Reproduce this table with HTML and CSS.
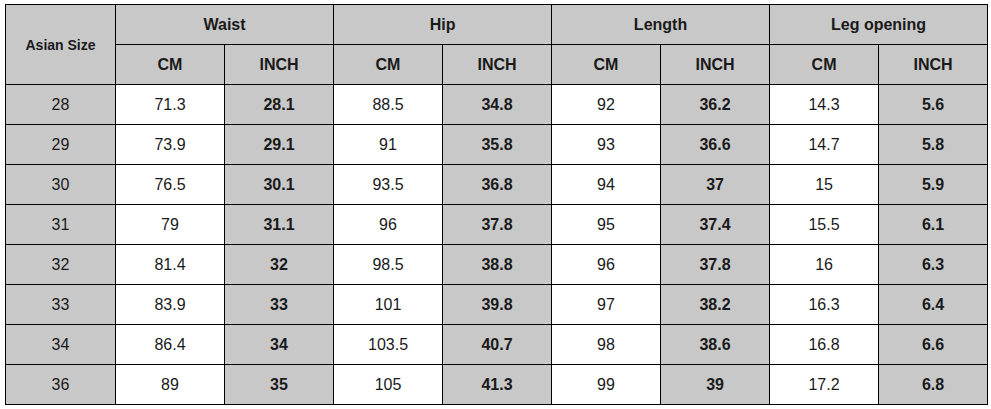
FILE: index.html
```html
<!DOCTYPE html>
<html>
<head>
<meta charset="utf-8">
<link rel="stylesheet" href="styles.css">
</head>
<body>
<table class="size-table">
  <colgroup>
    <col class="c-first">
    <col><col><col><col><col><col><col><col>
  </colgroup>
  <thead>
    <tr>
      <th rowspan="2" class="asian">Asian Size</th>
      <th colspan="2">Waist</th>
      <th colspan="2">Hip</th>
      <th colspan="2">Length</th>
      <th colspan="2">Leg opening</th>
    </tr>
    <tr>
      <th>CM</th><th>INCH</th>
      <th>CM</th><th>INCH</th>
      <th>CM</th><th>INCH</th>
      <th>CM</th><th>INCH</th>
    </tr>
  </thead>
  <tbody>
    <tr><td class="size">28</td><td class="cm">71.3</td><td class="in">28.1</td><td class="cm">88.5</td><td class="in">34.8</td><td class="cm">92</td><td class="in">36.2</td><td class="cm">14.3</td><td class="in">5.6</td></tr>
    <tr><td class="size">29</td><td class="cm">73.9</td><td class="in">29.1</td><td class="cm">91</td><td class="in">35.8</td><td class="cm">93</td><td class="in">36.6</td><td class="cm">14.7</td><td class="in">5.8</td></tr>
    <tr><td class="size">30</td><td class="cm">76.5</td><td class="in">30.1</td><td class="cm">93.5</td><td class="in">36.8</td><td class="cm">94</td><td class="in">37</td><td class="cm">15</td><td class="in">5.9</td></tr>
    <tr><td class="size">31</td><td class="cm">79</td><td class="in">31.1</td><td class="cm">96</td><td class="in">37.8</td><td class="cm">95</td><td class="in">37.4</td><td class="cm">15.5</td><td class="in">6.1</td></tr>
    <tr><td class="size">32</td><td class="cm">81.4</td><td class="in">32</td><td class="cm">98.5</td><td class="in">38.8</td><td class="cm">96</td><td class="in">37.8</td><td class="cm">16</td><td class="in">6.3</td></tr>
    <tr><td class="size">33</td><td class="cm">83.9</td><td class="in">33</td><td class="cm">101</td><td class="in">39.8</td><td class="cm">97</td><td class="in">38.2</td><td class="cm">16.3</td><td class="in">6.4</td></tr>
    <tr><td class="size">34</td><td class="cm">86.4</td><td class="in">34</td><td class="cm">103.5</td><td class="in">40.7</td><td class="cm">98</td><td class="in">38.6</td><td class="cm">16.8</td><td class="in">6.6</td></tr>
    <tr><td class="size">36</td><td class="cm">89</td><td class="in">35</td><td class="cm">105</td><td class="in">41.3</td><td class="cm">99</td><td class="in">39</td><td class="cm">17.2</td><td class="in">6.8</td></tr>
  </tbody>
</table>
</body>
</html>
```
FILE: styles.css
```css
html, body {
  margin: 0;
  padding: 0;
  background: #ffffff;
}
body {
  padding: 4px 0 0 5px;
  font-family: "Liberation Sans", Arial, sans-serif;
  color: #1a1a1a;
}
.size-table {
  border-collapse: collapse;
  table-layout: fixed;
  width: 982px;
}
.size-table col {
  width: 109px;
}
.size-table col.c-first {
  width: 110px;
}
.size-table th,
.size-table td {
  border: 1px solid #000;
  height: 40px;
  padding: 0;
  text-align: center;
  vertical-align: middle;
  font-size: 16px;
  box-sizing: border-box;
}
.size-table th {
  background: #c8c8c8;
  font-weight: bold;
}
.size-table th.asian {
  font-size: 14px;
}
.size-table td.size {
  background: #c8c8c8;
  font-weight: normal;
}
.size-table td.cm {
  background: #ffffff;
}
.size-table td.in {
  background: #c8c8c8;
  font-weight: bold;
}
```
